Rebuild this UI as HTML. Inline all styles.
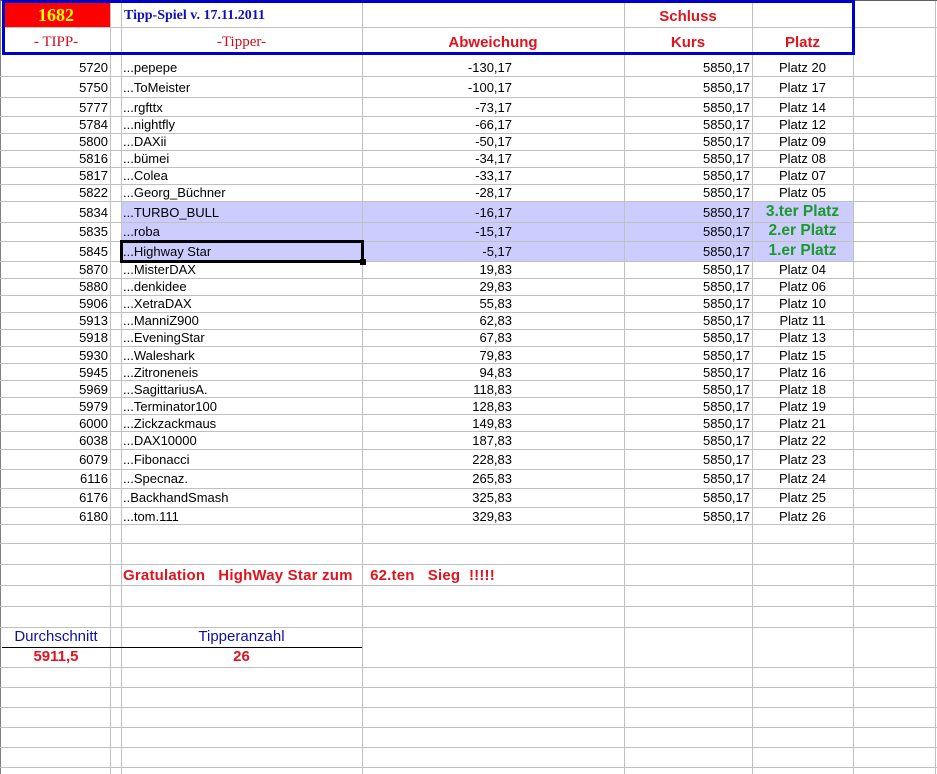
<!DOCTYPE html>
<html><head><meta charset="utf-8"><style>
*{margin:0;padding:0;box-sizing:border-box}
body{width:937px;height:774px;overflow:hidden;background:#fff;position:relative;font-family:"Liberation Sans",Arial,sans-serif;font-size:13px;color:#000}
.h{position:absolute;left:0;width:937px;height:1px;background:#c0c0c0}
.v{position:absolute;top:0;width:1px;height:774px;background:#c0c0c0}
.t{position:absolute;white-space:pre;line-height:16px}
.r{text-align:right}
.c{text-align:center}
.hl{position:absolute;background:#ccccff}
.red{color:#e0141e;font-weight:bold}
.grn{color:#1a9a2a;font-weight:bold;font-size:15.5px}
.hd{color:#e0141e;font-weight:bold;font-size:15px}
</style></head><body>
<div class="hl" style="left:121px;top:201px;width:732px;height:60px"></div>
<div style="position:absolute;left:2px;top:2px;width:108px;height:25px;background:#ff0000"></div>
<div class="v" style="left:0;background:#808080"></div>
<div class="v" style="left:110px"></div>
<div class="v" style="left:121px"></div>
<div class="v" style="left:362px"></div>
<div class="v" style="left:624px"></div>
<div class="v" style="left:752px"></div>
<div class="v" style="left:853px"></div>
<div class="v" style="left:935px"></div>
<div class="h" style="top:0;background:#606060"></div>
<div class="h" style="top:27px"></div>
<div class="h" style="top:76px"></div>
<div class="h" style="top:97px"></div>
<div class="h" style="top:116px"></div>
<div class="h" style="top:133px"></div>
<div class="h" style="top:150px"></div>
<div class="h" style="top:167px"></div>
<div class="h" style="top:184px"></div>
<div class="h" style="top:201px"></div>
<div class="h" style="top:222px"></div>
<div class="h" style="top:241px"></div>
<div class="h" style="top:261px"></div>
<div class="h" style="top:278px"></div>
<div class="h" style="top:295px"></div>
<div class="h" style="top:312px"></div>
<div class="h" style="top:329px"></div>
<div class="h" style="top:346px"></div>
<div class="h" style="top:363px"></div>
<div class="h" style="top:380px"></div>
<div class="h" style="top:397px"></div>
<div class="h" style="top:414px"></div>
<div class="h" style="top:431px"></div>
<div class="h" style="top:449px"></div>
<div class="h" style="top:469px"></div>
<div class="h" style="top:488px"></div>
<div class="h" style="top:507px"></div>
<div class="h" style="top:524px"></div>
<div class="h" style="top:543px"></div>
<div class="h" style="top:564px"></div>
<div class="h" style="top:585px"></div>
<div class="h" style="top:606px"></div>
<div class="h" style="top:627px"></div>
<div class="h" style="top:667px"></div>
<div class="h" style="top:687px"></div>
<div class="h" style="top:707px"></div>
<div class="h" style="top:727px"></div>
<div class="h" style="top:747px"></div>
<div class="h" style="top:767px"></div>
<div style="position:absolute;left:2px;top:647px;width:360px;height:1px;background:#000"></div>
<div style="position:absolute;left:2px;top:0;width:853px;height:55px;border:3px solid #0000cc"></div>
<div class="t c" style="left:2px;top:6px;width:108px;font-family:'Liberation Serif',serif;font-weight:bold;font-size:18px;line-height:18px;color:#ffff00">1682</div>
<div class="t" style="left:124px;top:8px;font-family:'Liberation Serif',serif;font-weight:bold;font-size:14px;color:#1010b0">Tipp-Spiel v. 17.11.2011</div>
<div class="t c" style="left:2px;top:34px;width:108px;font-family:'Liberation Serif',serif;font-size:15px;color:#cc1020">- TIPP-</div>
<div class="t c" style="left:121px;top:34px;width:241px;font-family:'Liberation Serif',serif;font-size:15px;color:#cc1020">-Tipper-</div>
<div class="t c hd" style="left:362px;top:35px;width:262px">Abweichung</div>
<div class="t c hd" style="left:624px;top:9px;width:128px">Schluss</div>
<div class="t c hd" style="left:624px;top:35px;width:128px">Kurs</div>
<div class="t c hd" style="left:752px;top:35px;width:101px">Platz</div>
<div style="position:absolute;left:120px;top:240px;width:244px;height:23px;border:3px solid #000"></div>
<div style="position:absolute;left:360px;top:259px;width:6px;height:6px;background:#000"></div>
<div class="t r" style="left:0;top:60px;width:108px">5720</div><div class="t" style="left:123px;top:60px">...pepepe</div><div class="t r" style="left:380px;top:60px;width:132px">-130,17</div><div class="t r" style="left:630px;top:60px;width:120px">5850,17</div><div class="t c" style="left:752px;top:60px;width:101px">Platz 20</div>
<div class="t r" style="left:0;top:80px;width:108px">5750</div><div class="t" style="left:123px;top:80px">...ToMeister</div><div class="t r" style="left:380px;top:80px;width:132px">-100,17</div><div class="t r" style="left:630px;top:80px;width:120px">5850,17</div><div class="t c" style="left:752px;top:80px;width:101px">Platz 17</div>
<div class="t r" style="left:0;top:100px;width:108px">5777</div><div class="t" style="left:123px;top:100px">...rgfttx</div><div class="t r" style="left:380px;top:100px;width:132px">-73,17</div><div class="t r" style="left:630px;top:100px;width:120px">5850,17</div><div class="t c" style="left:752px;top:100px;width:101px">Platz 14</div>
<div class="t r" style="left:0;top:117px;width:108px">5784</div><div class="t" style="left:123px;top:117px">...nightfly</div><div class="t r" style="left:380px;top:117px;width:132px">-66,17</div><div class="t r" style="left:630px;top:117px;width:120px">5850,17</div><div class="t c" style="left:752px;top:117px;width:101px">Platz 12</div>
<div class="t r" style="left:0;top:134px;width:108px">5800</div><div class="t" style="left:123px;top:134px">...DAXii</div><div class="t r" style="left:380px;top:134px;width:132px">-50,17</div><div class="t r" style="left:630px;top:134px;width:120px">5850,17</div><div class="t c" style="left:752px;top:134px;width:101px">Platz 09</div>
<div class="t r" style="left:0;top:151px;width:108px">5816</div><div class="t" style="left:123px;top:151px">...bümei</div><div class="t r" style="left:380px;top:151px;width:132px">-34,17</div><div class="t r" style="left:630px;top:151px;width:120px">5850,17</div><div class="t c" style="left:752px;top:151px;width:101px">Platz 08</div>
<div class="t r" style="left:0;top:168px;width:108px">5817</div><div class="t" style="left:123px;top:168px">...Colea</div><div class="t r" style="left:380px;top:168px;width:132px">-33,17</div><div class="t r" style="left:630px;top:168px;width:120px">5850,17</div><div class="t c" style="left:752px;top:168px;width:101px">Platz 07</div>
<div class="t r" style="left:0;top:185px;width:108px">5822</div><div class="t" style="left:123px;top:185px">...Georg_Büchner</div><div class="t r" style="left:380px;top:185px;width:132px">-28,17</div><div class="t r" style="left:630px;top:185px;width:120px">5850,17</div><div class="t c" style="left:752px;top:185px;width:101px">Platz 05</div>
<div class="t r" style="left:0;top:205px;width:108px">5834</div><div class="t" style="left:123px;top:205px">...TURBO_BULL</div><div class="t r" style="left:380px;top:205px;width:132px">-16,17</div><div class="t r" style="left:630px;top:205px;width:120px">5850,17</div><div class="t c grn" style="left:752px;top:203px;width:101px;line-height:17px">3.ter Platz</div>
<div class="t r" style="left:0;top:224px;width:108px">5835</div><div class="t" style="left:123px;top:224px">...roba</div><div class="t r" style="left:380px;top:224px;width:132px">-15,17</div><div class="t r" style="left:630px;top:224px;width:120px">5850,17</div><div class="t c grn" style="left:752px;top:222px;width:101px;line-height:17px">2.er Platz</div>
<div class="t r" style="left:0;top:244px;width:108px">5845</div><div class="t" style="left:123px;top:244px">...Highway Star</div><div class="t r" style="left:380px;top:244px;width:132px">-5,17</div><div class="t r" style="left:630px;top:244px;width:120px">5850,17</div><div class="t c grn" style="left:752px;top:242px;width:101px;line-height:17px">1.er Platz</div>
<div class="t r" style="left:0;top:262px;width:108px">5870</div><div class="t" style="left:123px;top:262px">...MisterDAX</div><div class="t r" style="left:380px;top:262px;width:132px">19,83</div><div class="t r" style="left:630px;top:262px;width:120px">5850,17</div><div class="t c" style="left:752px;top:262px;width:101px">Platz 04</div>
<div class="t r" style="left:0;top:279px;width:108px">5880</div><div class="t" style="left:123px;top:279px">...denkidee</div><div class="t r" style="left:380px;top:279px;width:132px">29,83</div><div class="t r" style="left:630px;top:279px;width:120px">5850,17</div><div class="t c" style="left:752px;top:279px;width:101px">Platz 06</div>
<div class="t r" style="left:0;top:296px;width:108px">5906</div><div class="t" style="left:123px;top:296px">...XetraDAX</div><div class="t r" style="left:380px;top:296px;width:132px">55,83</div><div class="t r" style="left:630px;top:296px;width:120px">5850,17</div><div class="t c" style="left:752px;top:296px;width:101px">Platz 10</div>
<div class="t r" style="left:0;top:313px;width:108px">5913</div><div class="t" style="left:123px;top:313px">...ManniZ900</div><div class="t r" style="left:380px;top:313px;width:132px">62,83</div><div class="t r" style="left:630px;top:313px;width:120px">5850,17</div><div class="t c" style="left:752px;top:313px;width:101px">Platz 11</div>
<div class="t r" style="left:0;top:330px;width:108px">5918</div><div class="t" style="left:123px;top:330px">...EveningStar</div><div class="t r" style="left:380px;top:330px;width:132px">67,83</div><div class="t r" style="left:630px;top:330px;width:120px">5850,17</div><div class="t c" style="left:752px;top:330px;width:101px">Platz 13</div>
<div class="t r" style="left:0;top:348px;width:108px">5930</div><div class="t" style="left:123px;top:348px">...Waleshark</div><div class="t r" style="left:380px;top:348px;width:132px">79,83</div><div class="t r" style="left:630px;top:348px;width:120px">5850,17</div><div class="t c" style="left:752px;top:348px;width:101px">Platz 15</div>
<div class="t r" style="left:0;top:365px;width:108px">5945</div><div class="t" style="left:123px;top:365px">...Zitroneneis</div><div class="t r" style="left:380px;top:365px;width:132px">94,83</div><div class="t r" style="left:630px;top:365px;width:120px">5850,17</div><div class="t c" style="left:752px;top:365px;width:101px">Platz 16</div>
<div class="t r" style="left:0;top:382px;width:108px">5969</div><div class="t" style="left:123px;top:382px">...SagittariusA.</div><div class="t r" style="left:380px;top:382px;width:132px">118,83</div><div class="t r" style="left:630px;top:382px;width:120px">5850,17</div><div class="t c" style="left:752px;top:382px;width:101px">Platz 18</div>
<div class="t r" style="left:0;top:399px;width:108px">5979</div><div class="t" style="left:123px;top:399px">...Terminator100</div><div class="t r" style="left:380px;top:399px;width:132px">128,83</div><div class="t r" style="left:630px;top:399px;width:120px">5850,17</div><div class="t c" style="left:752px;top:399px;width:101px">Platz 19</div>
<div class="t r" style="left:0;top:416px;width:108px">6000</div><div class="t" style="left:123px;top:416px">...Zickzackmaus</div><div class="t r" style="left:380px;top:416px;width:132px">149,83</div><div class="t r" style="left:630px;top:416px;width:120px">5850,17</div><div class="t c" style="left:752px;top:416px;width:101px">Platz 21</div>
<div class="t r" style="left:0;top:433px;width:108px">6038</div><div class="t" style="left:123px;top:433px">...DAX10000</div><div class="t r" style="left:380px;top:433px;width:132px">187,83</div><div class="t r" style="left:630px;top:433px;width:120px">5850,17</div><div class="t c" style="left:752px;top:433px;width:101px">Platz 22</div>
<div class="t r" style="left:0;top:452px;width:108px">6079</div><div class="t" style="left:123px;top:452px">...Fibonacci</div><div class="t r" style="left:380px;top:452px;width:132px">228,83</div><div class="t r" style="left:630px;top:452px;width:120px">5850,17</div><div class="t c" style="left:752px;top:452px;width:101px">Platz 23</div>
<div class="t r" style="left:0;top:471px;width:108px">6116</div><div class="t" style="left:123px;top:471px">...Specnaz.</div><div class="t r" style="left:380px;top:471px;width:132px">265,83</div><div class="t r" style="left:630px;top:471px;width:120px">5850,17</div><div class="t c" style="left:752px;top:471px;width:101px">Platz 24</div>
<div class="t r" style="left:0;top:490px;width:108px">6176</div><div class="t" style="left:123px;top:490px">..BackhandSmash</div><div class="t r" style="left:380px;top:490px;width:132px">325,83</div><div class="t r" style="left:630px;top:490px;width:120px">5850,17</div><div class="t c" style="left:752px;top:490px;width:101px">Platz 25</div>
<div class="t r" style="left:0;top:509px;width:108px">6180</div><div class="t" style="left:123px;top:509px">...tom.111</div><div class="t r" style="left:380px;top:509px;width:132px">329,83</div><div class="t r" style="left:630px;top:509px;width:120px">5850,17</div><div class="t c" style="left:752px;top:509px;width:101px">Platz 26</div>
<div class="t red" style="left:123px;top:567px;font-size:15px;line-height:18px;letter-spacing:0.2px">Gratulation   HighWay Star zum    62.ten   Sieg  !!!!!</div>
<div class="t c" style="left:2px;top:628px;width:108px;font-size:15px;color:#1010a0;line-height:18px">Durchschnitt</div>
<div class="t c" style="left:121px;top:628px;width:241px;font-size:15px;color:#1010a0;line-height:18px">Tipperanzahl</div>
<div class="t c red" style="left:2px;top:648px;width:108px;font-size:15px;line-height:18px">5911,5</div>
<div class="t c red" style="left:121px;top:648px;width:241px;font-size:15px;line-height:18px">26</div>
</body></html>
